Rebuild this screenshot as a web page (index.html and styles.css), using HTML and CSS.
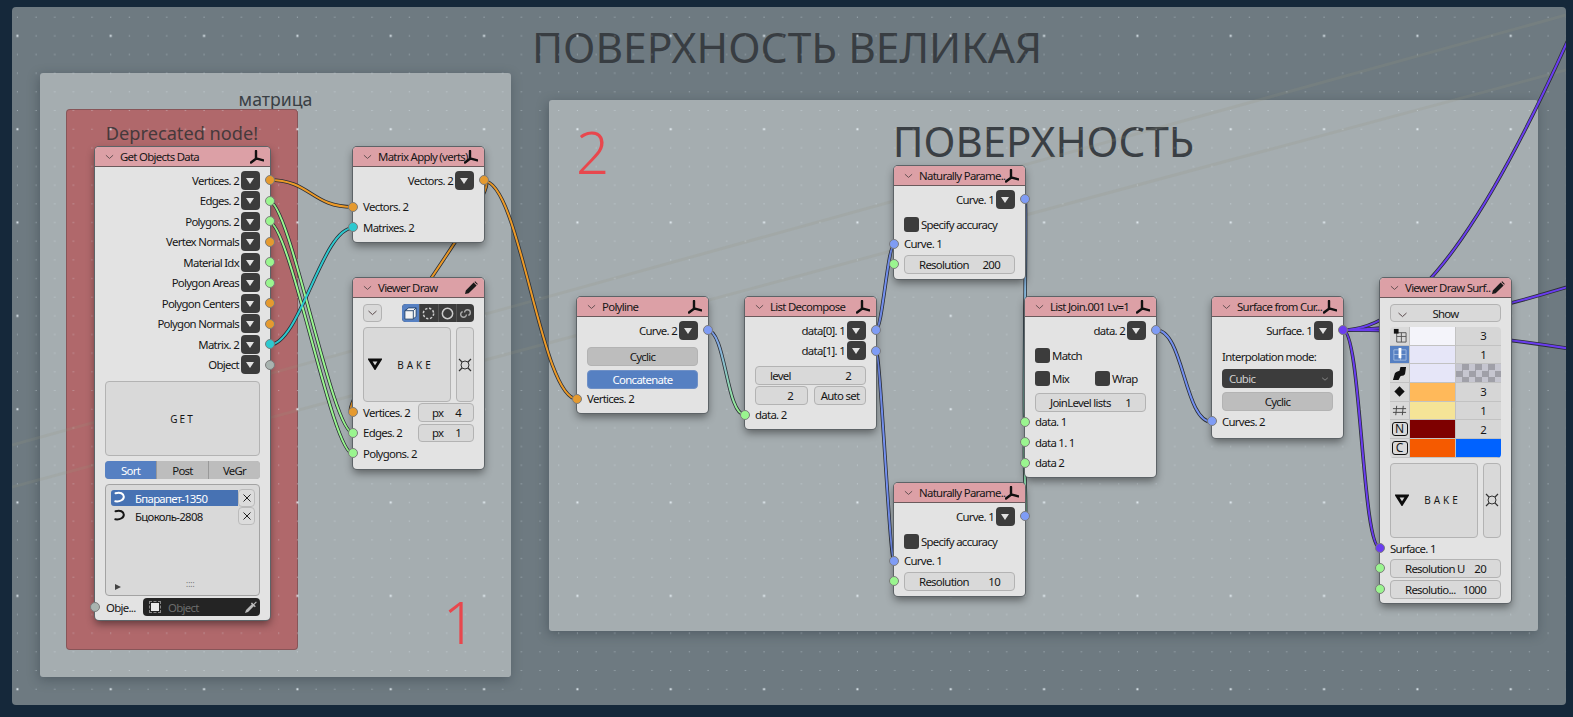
FILE: index.html
```html
<!DOCTYPE html>
<html lang="en">
<head>
    <meta charset="UTF-8">
    <meta name="viewport" content="width=device-width, initial-scale=1.0">
    <title>Node editor</title>
    <link rel="stylesheet" href="styles.css">
</head>
<body>
<svg class="defs" width="0" height="0">
    <symbol id="i-chev" viewBox="0 0 10 6"><path d="M1 1l4 3.6L9 1" fill="none" stroke="#5a4a4c" stroke-width="1"/></symbol>
    <symbol id="i-tri" viewBox="0 0 14 14"><path d="M6 1v7.5M6.300 8.500L1 12.500M6 8.300l7.500 2" fill="none" stroke="#111" stroke-width="2.400" stroke-linecap="round"/></symbol>
    <symbol id="i-pen" viewBox="0 0 14 14"><path d="M1 13l.8-3.600L9.600 1.600l3 3-7.900 7.600zM10.400.9l.8-.6 2.600 2.600-.6.800z" fill="#1a1a1a"/></symbol>
    <symbol id="i-bake" viewBox="0 0 14 12"><path d="M2 2h10L7 10z" fill="none" stroke="#0c0c0c" stroke-width="2.800" stroke-linejoin="miter"/></symbol>
    <symbol id="i-cross" viewBox="0 0 14 14"><circle cx="7" cy="7" r="4" fill="none" stroke="#333"/><path d="M1 1l3 3M13 1l-3 3M1 13l3-3M13 13l-3-3" stroke="#333" stroke-width="1.200"/></symbol>
    <symbol id="i-obj" viewBox="0 0 14 14"><path d="M2.500 2.200c5-1.500 8 .5 8.300 3.300s-3.500 5.600-8.500 4.800" fill="none" stroke="currentColor" stroke-width="2" stroke-linecap="round"/></symbol>
    <symbol id="i-x" viewBox="0 0 10 10"><path d="M1.500 1.500l7 7M8.500 1.500l-7 7" stroke="#222" stroke-width="1"/></symbol>
    <symbol id="i-drop" viewBox="0 0 14 14"><path d="M1 13l1-3 6-6 2 2-6 6zM8 2.500l1.500 1.500L12 1.500l.8.800-2.500 2.500L11.800 6.300l-1 1-4-4z" fill="#bbb"/></symbol>
</svg>

<main class="canvas">
    <h1 class="canvas-title">ПОВЕРХНОСТЬ ВЕЛИКАЯ</h1>

    <section class="frame f-matrix"><h2 class="frame-title small">матрица</h2></section>
    <section class="frame f-depr"><h2 class="frame-title depr">Deprecated node!</h2></section>
    <section class="frame f-surface"><h2 class="frame-title large">ПОВЕРХНОСТЬ</h2></section>
    <span class="note note-1">1</span>
    <span class="note note-2">2</span>

    <!-- page coords, canvas is shifted by 12,7 -->
    <svg class="wires" width="1554" height="698" viewBox="12 7 1554 698">
        <defs>
            <g id="dots">
                <rect x="0" y="0" width="1" height="1"/><rect x="18.670" y="0" width="1" height="1"/><rect x="37.330" y="0" width="1" height="1"/><rect x="56" y="0" width="1" height="1"/><rect x="74.670" y="0" width="1" height="1"/>
            </g>
            <pattern id="grid" x="16.900" y="16.700" width="93.333" height="93.333" patternUnits="userSpaceOnUse">
                <g class="dot">
                    <use href="#dots" y="0"/><use href="#dots" y="18.670"/><use href="#dots" y="37.330"/><use href="#dots" y="56"/><use href="#dots" y="74.670"/>
                </g>
                <rect class="dot-major" x="-.500" y="18.170" width="2" height="2"/>
                <rect class="dot-major" x="92.833" y="18.170" width="2" height="2"/>
            </pattern>
            <linearGradient id="g-blue-green" gradientUnits="userSpaceOnUse" x1="707" y1="330" x2="745" y2="415">
                <stop offset="0" stop-color="#7f9cf5"/><stop offset="1" stop-color="#9af58f"/>
            </linearGradient>
            <linearGradient id="g-join" gradientUnits="userSpaceOnUse" x1="1025" y1="199" x2="1025" y2="443">
                <stop offset="0" stop-color="#7f9cf5"/><stop offset="1" stop-color="#8fe0b0"/>
            </linearGradient>
            <path id="w-a" d="M269 180C311 180 311 207 353 207"/>
            <path id="w-b" d="M269 201C290 201 332 433 353 433"/>
            <path id="w-c" d="M269 222C290 222 332 454 353 454"/>
            <path id="w-d" d="M269 345C300 345 322 228 353 228"/>
            <path id="w-e" d="M484 181C510 181 327 413 353 413"/>
            <path id="w-f" d="M484 181C520 181 541 399 577 399"/>
            <path id="w-g" d="M707 330C726 330 726 415 745 415"/>
            <path id="w-h" d="M876 330C882 330 888 245 894 245"/>
            <path id="w-i" d="M876 350C880 350 890 562 894 562"/>
            <path id="w-j" d="M1025 199C1027 199 1023 422 1025 422"/>
            <path id="w-k" d="M1025 517C1027 517 1023 443 1025 443"/>
            <path id="w-l" d="M1156 330C1184 330 1184 422 1212 422"/>
            <path id="w-m" d="M1343 330C1361 330 1362 548 1380 548"/>
            <path id="w-n" d="M1343 330C1420 330 1500 200 1590 -10"/>
            <path id="w-o" d="M1343 330C1400 330 1480 315 1590 280"/>
            <path id="w-p" d="M1343 330C1400 330 1470 332 1590 352"/>
        </defs>

        <path class="muted" d="M12 445L1566 15"/>
        <path class="muted" d="M12 487L1566 70"/>
        <rect class="grid-fill" x="12" y="7" width="1554" height="698" fill="url(#grid)"/>

        <g class="wire-edge">
            <use href="#w-a"/><use href="#w-b"/><use href="#w-c"/><use href="#w-d"/><use href="#w-e"/><use href="#w-f"/>
            <use href="#w-g"/><use href="#w-h"/><use href="#w-i"/><use href="#w-j"/><use href="#w-k"/><use href="#w-l"/>
            <use href="#w-m"/><use href="#w-n"/><use href="#w-o"/><use href="#w-p"/>
        </g>
        <g class="wire orange"><use href="#w-a"/><use href="#w-e"/><use href="#w-f"/></g>
        <g class="wire green"><use href="#w-b"/><use href="#w-c"/></g>
        <g class="wire cyan"><use href="#w-d"/></g>
        <g class="wire blue"><use href="#w-h"/><use href="#w-i"/><use href="#w-l"/></g>
        <use class="wire grad-a" href="#w-g"/>
        <g class="wire grad-b"><use href="#w-j"/><use href="#w-k"/></g>
        <g class="wire purple"><use href="#w-m"/><use href="#w-n"/><use href="#w-o"/><use href="#w-p"/></g>
    </svg>

    <!-- Get Objects Data -->
    <article class="node n-objects">
        <header class="node-head">
            <svg class="chev"><use href="#i-chev"/></svg><span class="node-title">Get Objects Data</span>
            <svg class="head-icon"><use href="#i-tri"/></svg>
        </header>
        <div class="node-body">
            <div class="row out">Vertices. 2<i class="drop"></i><i class="sock orange"></i></div>
            <div class="row out">Edges. 2<i class="drop"></i><i class="sock green"></i></div>
            <div class="row out">Polygons. 2<i class="drop"></i><i class="sock green"></i></div>
            <div class="row out">Vertex Normals<i class="drop"></i><i class="sock orange"></i></div>
            <div class="row out">Material Idx<i class="drop"></i><i class="sock green"></i></div>
            <div class="row out">Polygon Areas<i class="drop"></i><i class="sock green"></i></div>
            <div class="row out">Polygon Centers<i class="drop"></i><i class="sock orange"></i></div>
            <div class="row out">Polygon Normals<i class="drop"></i><i class="sock orange"></i></div>
            <div class="row out">Matrix. 2<i class="drop"></i><i class="sock cyan"></i></div>
            <div class="row out">Object<i class="drop"></i><i class="sock gray"></i></div>
            <div class="btn get">GET</div>
            <div class="tabs">
                <span class="tab on">Sort</span><span class="tab">Post</span><span class="tab">VeGr</span>
            </div>
            <div class="list">
                <div class="list-row sel">
                    <svg class="list-icon"><use href="#i-obj"/></svg><span>Бпарапет-1350</span>
                    <span class="list-x"><svg><use href="#i-x"/></svg></span>
                </div>
                <div class="list-row">
                    <svg class="list-icon"><use href="#i-obj"/></svg><span>Бцоколь-2808</span>
                    <span class="list-x"><svg><use href="#i-x"/></svg></span>
                </div>
                <div class="list-foot"><i class="list-play"></i><span class="list-grip">::::</span></div>
            </div>
            <div class="row obj-row">
                <i class="sock gray"></i><span class="obj-label">Obje...</span>
                <div class="obj-field">
                    <span class="obj-square"></span><span class="obj-hint">Object</span>
                    <svg class="obj-drop"><use href="#i-drop"/></svg>
                </div>
            </div>
        </div>
    </article>

    <!-- Matrix Apply -->
    <article class="node n-matrix">
        <header class="node-head">
            <svg class="chev"><use href="#i-chev"/></svg><span class="node-title">Matrix Apply (verts)</span>
            <svg class="head-icon over"><use href="#i-tri"/></svg>
        </header>
        <div class="node-body">
            <div class="row out">Vectors. 2<i class="drop"></i><i class="sock orange"></i></div>
            <div class="row in gap-top"><i class="sock orange"></i>Vectors. 2</div>
            <div class="row in"><i class="sock cyan"></i>Matrixes. 2</div>
        </div>
    </article>

    <!-- Viewer Draw -->
    <article class="node n-viewer">
        <header class="node-head">
            <svg class="chev"><use href="#i-chev"/></svg><span class="node-title">Viewer Draw</span>
            <svg class="head-icon"><use href="#i-pen"/></svg>
        </header>
        <div class="node-body tight">
            <div class="tool-row">
                <span class="btn toggle"><svg class="toggle-chev"><use href="#i-chev"/></svg></span>
                <div class="seg">
                    <span class="seg-item on">
                        <svg viewBox="0 0 16 16"><path d="M2 5l4-3h8v9l-3 3H2zM2 5h9v9M11 5l3-3" fill="#f4f4f4" stroke="#26456e" stroke-width="1"/></svg>
                    </span>
                    <span class="seg-item">
                        <svg viewBox="0 0 16 16"><circle cx="8" cy="8" r="5.500" fill="none" stroke="#ccc" stroke-width="1.600" stroke-dasharray="2.500 1.800"/></svg>
                    </span>
                    <span class="seg-item">
                        <svg viewBox="0 0 16 16"><circle cx="8" cy="8" r="5.500" fill="none" stroke="#ccc" stroke-width="1.600"/></svg>
                    </span>
                    <span class="seg-item">
                        <svg viewBox="0 0 16 16"><path d="M5 6c-3 1-3 6 1 6 2 0 3-2 3-3M11 10c3-1 3-6-1-6-2 0-3 2-3 3" fill="none" stroke="#aaa" stroke-width="1.500"/></svg>
                    </span>
                </div>
            </div>
            <div class="bake-row">
                <div class="btn bake"><svg class="bake-icon"><use href="#i-bake"/></svg><span class="bake-text">BAKE</span></div>
                <div class="btn bake-side"><svg><use href="#i-cross"/></svg></div>
            </div>
            <div class="row in split"><i class="sock orange"></i>Vertices. 2<span class="field px"><span>px</span><span>4</span></span></div>
            <div class="row in split"><i class="sock green"></i>Edges. 2<span class="field px"><span>px</span><span>1</span></span></div>
            <div class="row in"><i class="sock green"></i>Polygons. 2</div>
        </div>
    </article>

    <!-- Polyline -->
    <article class="node n-polyline">
        <header class="node-head">
            <svg class="chev"><use href="#i-chev"/></svg><span class="node-title">Polyline</span>
            <svg class="head-icon"><use href="#i-tri"/></svg>
        </header>
        <div class="node-body">
            <div class="row out">Curve. 2<i class="drop"></i><i class="sock blue"></i></div>
            <div class="btn wide gray-btn m-top">Cyclic</div>
            <div class="btn wide blue-btn">Concatenate</div>
            <div class="row in"><i class="sock orange"></i>Vertices. 2</div>
        </div>
    </article>

    <!-- List Decompose -->
    <article class="node n-decompose">
        <header class="node-head">
            <svg class="chev"><use href="#i-chev"/></svg><span class="node-title">List Decompose</span>
            <svg class="head-icon"><use href="#i-tri"/></svg>
        </header>
        <div class="node-body">
            <div class="row out">data[0]. 1<i class="drop"></i><i class="sock blue"></i></div>
            <div class="row out">data[1]. 1<i class="drop"></i><i class="sock blue"></i></div>
            <div class="field level"><span>level</span><span>2</span></div>
            <div class="pair">
                <span class="field num"><span>2</span></span>
                <span class="btn auto">Auto set</span>
            </div>
            <div class="row in"><i class="sock green"></i>data. 2</div>
        </div>
    </article>

    <!-- Naturally Parameterized x2 -->
    <article class="node n-nat1">
        <header class="node-head">
            <svg class="chev"><use href="#i-chev"/></svg><span class="node-title">Naturally Parame..</span>
            <svg class="head-icon over"><use href="#i-tri"/></svg>
        </header>
        <div class="node-body">
            <div class="row out">Curve. 1<i class="drop"></i><i class="sock blue"></i></div>
            <label class="check-row m-check"><i class="check"></i>Specify accuracy</label>
            <div class="row in"><i class="sock blue"></i>Curve. 1</div>
            <div class="row in widget"><i class="sock green"></i><span class="field grow res"><span>Resolution</span><span>200</span></span></div>
        </div>
    </article>

    <article class="node n-nat2">
        <header class="node-head">
            <svg class="chev"><use href="#i-chev"/></svg><span class="node-title">Naturally Parame..</span>
            <svg class="head-icon over"><use href="#i-tri"/></svg>
        </header>
        <div class="node-body">
            <div class="row out">Curve. 1<i class="drop"></i><i class="sock blue"></i></div>
            <label class="check-row m-check"><i class="check"></i>Specify accuracy</label>
            <div class="row in"><i class="sock blue"></i>Curve. 1</div>
            <div class="row in widget"><i class="sock green"></i><span class="field grow res"><span>Resolution</span><span>10</span></span></div>
        </div>
    </article>

    <!-- List Join -->
    <article class="node n-join">
        <header class="node-head">
            <svg class="chev"><use href="#i-chev"/></svg><span class="node-title">List Join.001 Lv=1</span>
            <svg class="head-icon"><use href="#i-tri"/></svg>
        </header>
        <div class="node-body">
            <div class="row out">data. 2<i class="drop"></i><i class="sock blue"></i></div>
            <label class="check-row m-join"><i class="check"></i>Match</label>
            <div class="check-pair">
                <label class="check-row"><i class="check"></i>Mix</label>
                <label class="check-row"><i class="check"></i>Wrap</label>
            </div>
            <div class="field joinlevel"><span>JoinLevel lists</span><span>1</span></div>
            <div class="row in"><i class="sock green"></i>data. 1</div>
            <div class="row in"><i class="sock green"></i>data 1. 1</div>
            <div class="row in"><i class="sock green"></i>data 2</div>
        </div>
    </article>

    <!-- Surface from Curves -->
    <article class="node n-surf">
        <header class="node-head">
            <svg class="chev"><use href="#i-chev"/></svg><span class="node-title">Surface from Cur...</span>
            <svg class="head-icon over"><use href="#i-tri"/></svg>
        </header>
        <div class="node-body">
            <div class="row out">Surface. 1<i class="drop"></i><i class="sock purple"></i></div>
            <div class="row plain">Interpolation mode:</div>
            <div class="select"><span>Cubic</span><svg class="select-chev" viewBox="0 0 10 6"><path d="M1.500 1.500L5 4.500l3.500-3" fill="none" stroke="#999"/></svg></div>
            <div class="btn wide gray-btn">Cyclic</div>
            <div class="row in"><i class="sock blue"></i>Curves. 2</div>
        </div>
    </article>

    <!-- Viewer Draw Surface -->
    <article class="node n-vsurf">
        <header class="node-head">
            <svg class="chev"><use href="#i-chev"/></svg><span class="node-title">Viewer Draw Surf..</span>
            <svg class="head-icon over"><use href="#i-pen"/></svg>
        </header>
        <div class="node-body tight">
            <div class="btn wide show"><svg class="toggle-chev"><use href="#i-chev"/></svg>Show</div>
            <div class="swatches">
                <span class="sw-icon"><svg viewBox="0 0 16 16"><path d="M5 5h10v10H5zM5 9h10M10 5v10" fill="none" stroke="#555"/><rect x="2" y="1" width="5" height="5" fill="#111"/></svg></span>
                <span class="sw c1"></span><span class="sw-val">3</span>
                <span class="sw-icon on"><svg viewBox="0 0 16 16"><path d="M2 3h13v11H2zM9 3v11M2 8h13" fill="none" stroke="#9fb9de"/><rect x="7" y="1" width="3" height="11" fill="#fff"/></svg></span>
                <span class="sw c2"></span><span class="sw-val">1</span>
                <span class="sw-icon"><svg viewBox="0 0 16 16"><path d="M1 15l2-7c1-2 3-2 5-3l1-4h6l-1 7c-1 3-3 2-5 3l-2 4z" fill="#111"/></svg></span>
                <span class="sw c2"></span><span class="sw check-bg"></span>
                <span class="sw-icon"><svg viewBox="0 0 16 16"><path d="M8 2.500L13.500 8 8 13.500 2.500 8z" fill="#111"/></svg></span>
                <span class="sw c4"></span><span class="sw-val">3</span>
                <span class="sw-icon"><svg viewBox="0 0 16 16"><path d="M1 6h14M1 10h14M5 3l-1 10M12 3l-1 10" fill="none" stroke="#444"/></svg></span>
                <span class="sw c5"></span><span class="sw-val">1</span>
                <span class="sw-icon"><span class="letter">N</span></span>
                <span class="sw c6"></span><span class="sw-val">2</span>
                <span class="sw-icon"><span class="letter">C</span></span>
                <span class="sw c7"></span><span class="sw c8"></span>
            </div>
            <div class="bake-row">
                <div class="btn bake"><svg class="bake-icon"><use href="#i-bake"/></svg><span class="bake-text">BAKE</span></div>
                <div class="btn bake-side"><svg><use href="#i-cross"/></svg></div>
            </div>
            <div class="row in"><i class="sock purple"></i>Surface. 1</div>
            <div class="row in widget"><i class="sock green"></i><span class="field grow resu"><span>Resolution U</span><span>20</span></span></div>
            <div class="row in widget"><i class="sock green"></i><span class="field grow resu"><span>Resolutio...</span><span>1000</span></span></div>
        </div>
    </article>
</main>
</body>
</html>
```

FILE: styles.css
```css
html, body {
    margin: 0;
    height: 100%;
    overflow: hidden;
    background-color: #15283a;
}
body {
    font-family: "Noto Sans", sans-serif;
    font-size: 11.400px;
    letter-spacing: -.7px;
    color: #161616;
}
.defs {
    position: absolute;
}
.canvas {
    position: relative;
    width: 1554px;
    height: 698px;
    margin: 7px 0 0 12px;
    background-color: #6e7a81;
    border-radius: 4px;
    overflow: hidden;
}
.canvas-title {
    margin: 0;
    padding-top: 13px;
    font-size: 42.500px;
    font-weight: 400;
    letter-spacing: 0;
    line-height: 54px;
    color: #383d42;
    text-align: center;
    position: relative;
    left: -2px;
}

/* frames */
.frame {
    position: absolute;
    box-sizing: border-box;
    text-align: center;
    background-color: #a5adb0;
    border-radius: 3px;
    box-shadow: -1px 3px 12px rgba(30, 40, 50, .35);
}
.f-matrix { left: 28px; top: 66px; width: 471px; height: 604px; }
.f-depr { left: 55px; top: 103px; width: 230px; height: 539px; background-color: #b0686b; box-shadow: 0 0 0 1px #875558; }
.f-surface { left: 537px; top: 93px; width: 989px; height: 531px; }
.frame-title {
    margin: 0;
    font-weight: 400;
    letter-spacing: 0;
    color: #3a3f44;
}
.frame-title.small { font-size: 17.700px; line-height: 22px; padding-top: 15px; }
.frame-title.depr { font-size: 18.200px; line-height: 24px; padding-top: 11px; color: #46393b; }
.frame-title.large { font-size: 42px; line-height: 48px; padding-top: 17px; }
.note {
    position: absolute;
    font-size: 58px;
    font-weight: 300;
    letter-spacing: 0;
    line-height: 60px;
    color: #e8474d;
}
.note-1 { left: 431px; top: 585px; }
.note-2 { left: 564px; top: 115px; }

/* grid and wires */
.wires {
    position: absolute;
    left: 0;
    top: 0;
}
.dot { fill: rgba(225, 238, 245, .5); }
.dot-major { fill: rgba(235, 245, 250, .85); }
.muted { fill: none; stroke: rgba(150, 150, 125, .18); stroke-width: 3; }
.wire-edge { fill: none; stroke: #2b2f36; stroke-width: 3.6; }
.wire { fill: none; stroke-width: 2; }
.wire.orange { stroke: #ec9a28; }
.wire.green { stroke: #9af58f; }
.wire.cyan { stroke: #2ec9cf; }
.wire.blue { stroke: #7490f0; }
.wire.purple { stroke: #6a3df0; }
.wire.grad-a { stroke: url(#g-blue-green); }
.wire.grad-b { stroke: url(#g-join); }

/* nodes */
.node {
    position: absolute;
    background-color: #e3e3e3;
    border-radius: 4px;
    box-shadow: 0 0 0 1px #5d6367, 0 4px 9px rgba(0, 0, 0, .45);
}
.n-objects { left: 83px; top: 140px; width: 175px; }
.n-matrix { left: 341px; top: 140px; width: 131px; }
.n-viewer { left: 341px; top: 271px; width: 131px; }
.n-polyline { left: 565px; top: 290px; width: 131px; }
.n-decompose { left: 733px; top: 290px; width: 131px; }
.n-nat1 { left: 882px; top: 159px; width: 131px; }
.n-nat2 { left: 882px; top: 476px; width: 131px; }
.n-join { left: 1013px; top: 290px; width: 131px; }
.n-surf { left: 1200px; top: 290px; width: 131px; }
.n-vsurf { left: 1368px; top: 271px; width: 131px; }

.node-head {
    display: flex;
    align-items: center;
    height: 19px;
    padding: 0 6px 0 10px;
    background-color: #dca0a6;
    border-bottom: 1px solid #6b5a5c;
    border-radius: 4px 4px 0 0;
    white-space: nowrap;
}
.chev {
    flex: none;
    width: 9px;
    height: 6px;
    margin-right: 6px;
}
.node-title {
    flex: 1;
    min-width: 0;
}
.head-icon {
    flex: none;
    width: 14px;
    height: 14px;
}
.head-icon.over {
    margin-left: -14px;
}
.node-body {
    padding: 3px 10px 4px;
}
.node-body.tight {
    padding-top: 6px;
}
.n-viewer .node-body { padding-bottom: 5.500px; }
.n-surf .node-body { padding-bottom: 6.500px; }
.row {
    position: relative;
    display: flex;
    align-items: center;
    height: 20.5px;
    white-space: nowrap;
}
.row.out {
    justify-content: flex-end;
}
.row.gap-top {
    margin-top: 6px;
}
.row.split {
    justify-content: space-between;
}
.row.plain {
    height: 25.500px;
    margin-top: 3px;
}
.sock {
    position: absolute;
    box-sizing: border-box;
    width: 10px;
    height: 10px;
    top: 5px;
    border-radius: 50%;
    border: 1px solid #7c7c7c;
}
.row.out .sock { right: -15px; }
.row.in .sock, .obj-row .sock { left: -15px; }
.sock.orange { background-color: #e59a2f; }
.sock.green { background-color: #9af58f; }
.sock.blue { background-color: #7f9cf5; }
.sock.cyan { background-color: #2ec9cf; }
.sock.gray { background-color: #a9b4b0; }
.sock.purple { background-color: #6a3df0; }
.drop {
    flex: none;
    position: relative;
    width: 19px;
    height: 19px;
    margin-left: 2px;
    background-color: #3c3c3c;
    border-radius: 4px;
}
.drop::after {
    content: "";
    position: absolute;
    left: 5px;
    top: 7px;
    border: 4.500px solid transparent;
    border-top: 6px solid #e2e2e2;
    border-bottom: 0;
}

/* widgets */
.btn, .field {
    box-sizing: border-box;
    background-color: #d9d9d9;
    border: 1px solid #b3b3b3;
    border-radius: 4px;
}
.btn.wide {
    display: flex;
    align-items: center;
    justify-content: center;
    height: 19px;
}
.gray-btn { background-color: #bdbdbd; }
.blue-btn { background-color: #5680c2; border-color: #6f90c6; color: #fff; margin-top: 4px; }
.m-top { margin-top: 6px; }
.get {
    display: flex;
    align-items: center;
    justify-content: center;
    height: 75px;
    margin-top: 6px;
    letter-spacing: 2px;
    font-size: 10px;
}
.tabs {
    display: flex;
    height: 18px;
    margin-top: 5px;
    border-radius: 4px;
    overflow: hidden;
    box-shadow: inset 0 0 0 1px #aaa;
}
.tab {
    flex: 1;
    display: flex;
    align-items: center;
    justify-content: center;
    background-color: #bdbdbd;
    border-left: 1px solid #999;
}
.tab.on {
    background-color: #5680c2;
    color: #fff;
    border-left: 0;
}
.list {
    box-sizing: border-box;
    position: relative;
    height: 112px;
    margin-top: 5px;
    padding: 5px;
    background-color: #d9d9d9;
    border: 1px solid #a3a3a3;
    border-radius: 4px;
}
.list-row {
    display: flex;
    align-items: center;
    height: 16px;
    margin-bottom: 2px;
    padding-left: 2px;
    position: relative;
    border-radius: 3px 0 0 3px;
    margin-right: 16px;
}
.list-row.sel {
    background-color: #4772b3;
    color: #fff;
}
.list-icon {
    width: 14px;
    height: 14px;
    margin-right: 8px;
}
.list-x {
    position: absolute;
    right: -17px;
    top: -1px;
    width: 17px;
    height: 18px;
    box-sizing: border-box;
    display: flex;
    align-items: center;
    justify-content: center;
    background-color: #dcdcdc;
    border: 1px solid #bbb;
    border-radius: 4px;
}
.list-x svg { width: 10px; height: 10px; }
.list-foot {
    position: absolute;
    left: 9px;
    right: 5px;
    bottom: 3px;
    height: 10px;
}
.list-play {
    position: absolute;
    left: 0;
    top: 2px;
    border: 3px solid transparent;
    border-left: 6px solid #444;
    border-right: 0;
}
.list-grip {
    position: absolute;
    left: 71px;
    top: -4px;
    font-size: 8px;
    letter-spacing: 0;
    color: #666;
}
.obj-row {
    height: 18px;
    margin-top: 2px;
}
.obj-row .sock { top: 4px; background-color: #a9b4b0; }
.obj-label { margin-left: 1px; width: 37px; flex: none; }
.obj-field {
    flex: 1;
    display: flex;
    align-items: center;
    height: 18px;
    padding: 0 2px 0 6px;
    background-color: #242424;
    border-radius: 4px;
    color: #6c6c6c;
}
.obj-square {
    width: 8px;
    height: 8px;
    background-color: #e8e8e8;
    outline: 1px dashed #888;
    outline-offset: 1px;
    margin: 0 9px 0 2px;
}
.obj-hint { flex: 1; }
.obj-drop { width: 14px; height: 14px; }

.tool-row {
    display: flex;
    justify-content: space-between;
    height: 18px;
}
.toggle {
    width: 19px;
    display: flex;
    align-items: center;
    justify-content: center;
}
.toggle-chev { width: 13px; height: 6px; }
.seg {
    display: flex;
    width: 72px;
    border-radius: 4px;
    overflow: hidden;
    background-color: #3c3c3c;
}
.seg-item {
    flex: 1;
    display: flex;
    align-items: center;
    justify-content: center;
    border-left: 1px solid #555;
}
.seg-item.on {
    background-color: #5680c2;
    border-left: 0;
}
.seg-item svg { width: 15px; height: 15px; }
.bake-row {
    display: flex;
    justify-content: space-between;
    height: 75px;
    margin-top: 5px;
}
.bake {
    position: relative;
    width: 88px;
    display: flex;
    align-items: center;
    justify-content: center;
}
.bake-icon {
    position: absolute;
    left: 4px;
    top: 30px;
    width: 14px;
    height: 12px;
}
.bake-text {
    letter-spacing: 3px;
    font-size: 10px;
    padding-left: 17px;
}
.bake-side {
    width: 18px;
    display: flex;
    align-items: center;
    justify-content: center;
}
.bake-side svg { width: 14px; height: 14px; }
.field {
    display: flex;
    justify-content: space-between;
    align-items: center;
    height: 18.500px;
}
.px {
    width: 56px;
    padding: 0 12px 0 13px;
}
.level { height: 19px; margin-top: 5px; padding: 0 14px; }
.btn.wide.show { position: relative; height: 18px; }
.show .toggle-chev { position: absolute; left: 5px; top: 7px; }
.pair {
    display: flex;
    justify-content: space-between;
    margin-top: 1px;
}
.num { width: 53px; justify-content: flex-end; padding-right: 14px; }
.auto {
    width: 52px;
    height: 18.500px;
    display: flex;
    align-items: center;
    justify-content: center;
}
.check-row {
    display: flex;
    align-items: center;
    height: 15px;
    white-space: nowrap;
}
.check {
    width: 15px;
    height: 15px;
    margin-right: 2px;
    background-color: #3c3c3c;
    border-radius: 3px;
}
.m-check { margin-top: 7px; margin-bottom: 2px; }
.m-join { margin-top: 7px; margin-bottom: 8px; }
.check-pair {
    display: grid;
    grid-template-columns: 60px 1fr;
    margin-bottom: 7px;
}
.joinlevel { height: 19px; padding: 0 14px; }
.grow { flex: 1; height: 19px; }
.res, .resu { padding: 0 14px; }
.select {
    box-sizing: border-box;
    display: flex;
    justify-content: space-between;
    align-items: center;
    height: 19px;
    padding: 0 4px 0 7px;
    margin-bottom: 4px;
    color: #cfcfcf;
    background-color: #3c3c3c;
    border-radius: 4px;
}
.select-chev { width: 8px; height: 6px; }
.swatches {
    display: grid;
    grid-template-columns: 19px 46px 1fr;
    grid-auto-rows: 18.700px;
    margin-top: 5px;
    border-radius: 4px;
    overflow: hidden;
}
.sw-icon {
    display: flex;
    align-items: center;
    justify-content: center;
    background-color: #d9d9d9;
    border-bottom: 1px solid #c2c2c2;
}
.sw-icon.on { background-color: #5680c2; }
.sw-icon svg { width: 15px; height: 15px; }
.sw { border-bottom: 1px solid #c2c2c2; border-left: 1px solid #c2c2c2; }
.sw-val {
    display: flex;
    align-items: center;
    justify-content: flex-end;
    padding-right: 15px;
    background-color: #d6d6d6;
    border-bottom: 1px solid #c2c2c2;
    border-left: 1px solid #c2c2c2;
}
.c1 { background-color: #f4f4fa; }
.c2 { background-color: #e6e6f8; }
.c4 { background-color: #ffb95a; }
.c5 { background-color: #f5e497; }
.c6 { background-color: #7e0000; }
.c7 { background-color: #f55a00; }
.c8 { background-color: #0062ff; }
.check-bg {
    background-color: #c6c6d0;
    background-image: conic-gradient(#a0a0a8 25%, transparent 0 50%, #a0a0a8 0 75%, transparent 0);
    background-size: 13px 13px;
}
.letter {
    display: block;
    width: 16px;
    height: 14px;
    line-height: 12px;
    font-size: 12px;
    font-weight: 400;
    letter-spacing: 0;
    text-align: center;
    border: 1.500px solid #111;
    border-radius: 3px;
    box-sizing: border-box;
}
```
